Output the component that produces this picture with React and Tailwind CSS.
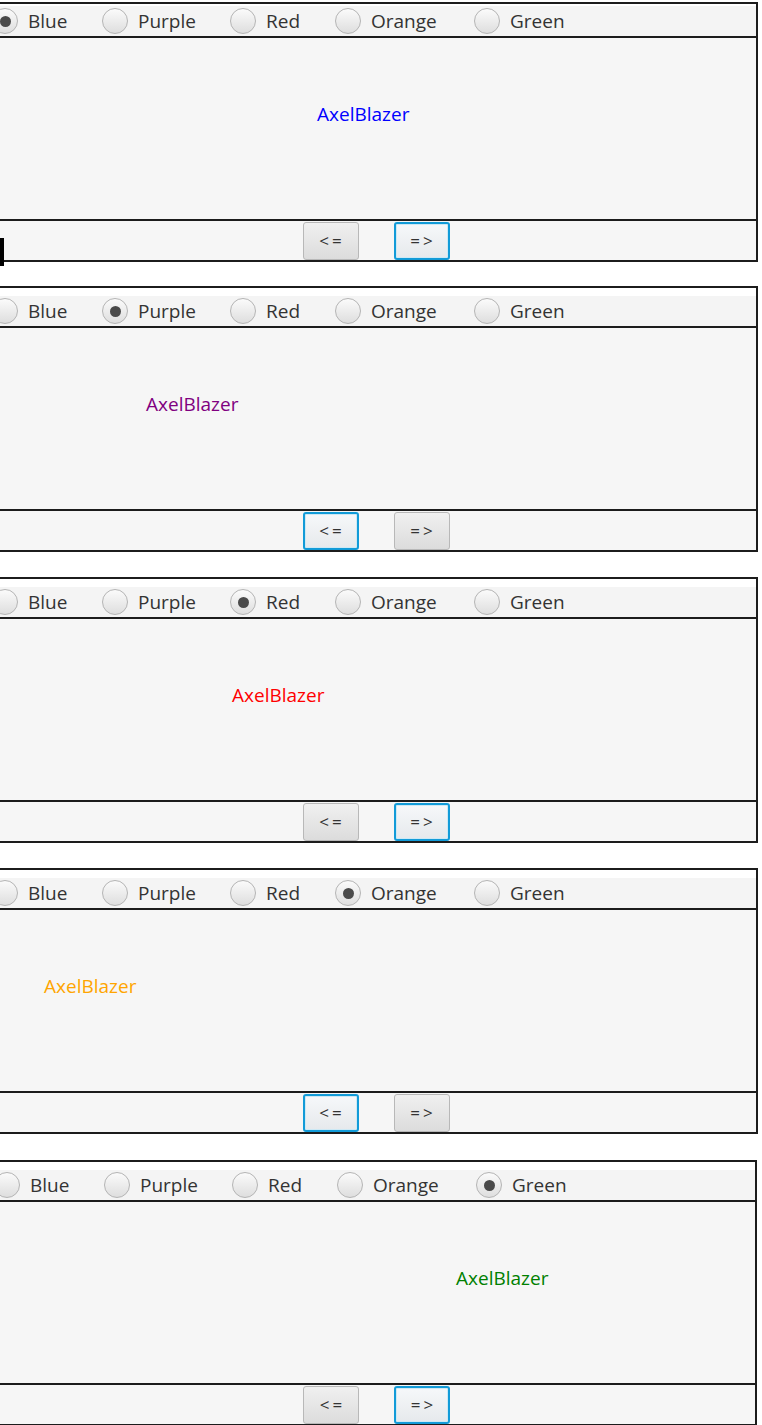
import React from "react";

const colors = ["Blue", "Purple", "Red", "Orange", "Green"];
const itemWidths = ["w-[110px]", "w-[128px]", "w-[105px]", "w-[139px]", "w-auto"];

const panels = [
  { selected: 0, text: "text-[#0000ff]", pos: "left-[321px]", focus: 1, strip: "h-[2px]", frame: "-ml-[6px] w-[764px]", gap: "mt-[2px]" },
  { selected: 1, text: "text-[#800080]", pos: "left-[150px]", focus: 0, strip: "h-[8px]", frame: "-ml-[6px] w-[764px]", gap: "mt-[24px]" },
  { selected: 2, text: "text-[#ff0000]", pos: "left-[236px]", focus: 1, strip: "h-[8px]", frame: "-ml-[6px] w-[764px]", gap: "mt-[25px]" },
  { selected: 3, text: "text-[#ffa500]", pos: "left-[48px]", focus: 0, strip: "h-[8px]", frame: "-ml-[6px] w-[764px]", gap: "mt-[25px]" },
  { selected: 4, text: "text-[#008000]", pos: "left-[458px]", focus: 1, strip: "h-[8px]", frame: "-ml-[4px] w-[761px]", gap: "mt-[26px]" },
];

const Radio = ({ label, checked, width }) => (
  <div className={`flex items-center shrink-0 ${width}`}>
    <span className="flex h-[26px] w-[26px] shrink-0 items-center justify-center rounded-full border border-[#b4b4b4] bg-gradient-to-b from-[#fbfbfb] to-[#dedede]">
      {checked && <span className="h-[11px] w-[11px] rounded-full bg-[#4a4a4a]" />}
    </span>
    <span className="ml-[10px] text-[19px] leading-none text-[#333]">{label}</span>
  </div>
);

const Button = ({ label, focused }) => (
  <button
    className={
      focused
        ? "flex h-[38px] w-[56px] items-center justify-center rounded-[3px] border-2 border-[#129bd8] bg-gradient-to-b from-[#f6f8fa] to-[#e6e9ec] text-[17px] tracking-[3px] pl-[3px] text-[#333] shadow-[inset_0_0_0_1px_#cde9f5]"
        : "flex h-[38px] w-[56px] items-center justify-center rounded-[3px] border border-[#b8b8b8] bg-gradient-to-b from-[#f0f0f0] to-[#dcdcdc] text-[17px] tracking-[3px] pl-[3px] text-[#333]"
    }
  >
    {label}
  </button>
);

const Panel = ({ p }) => (
  <div className={`${p.gap} ${p.frame} border-2 border-[#1c1c1c] bg-white`}>
    <div className={`${p.strip} bg-white`} />
    {/* colour radios */}
    <div className="flex h-[30px] items-center bg-[#f4f4f4] -ml-[4px]">
      {colors.map((c, i) => (
        <Radio key={c} label={c} checked={p.selected === i} width={itemWidths[i]} />
      ))}
    </div>
    <div className="h-[2px] bg-[#1c1c1c]" />
    {/* text area */}
    <div className="relative h-[181px] bg-[#f6f6f6]">
      <span className={`absolute top-[64px] ${p.pos} text-[19px] leading-[24px] ${p.text}`}>AxelBlazer</span>
    </div>
    <div className="h-[2px] bg-[#1c1c1c]" />
    {/* buttons */}
    <div className="flex h-[39px] items-start justify-center gap-[35px] bg-[#f6f6f6] pt-[1px]">
      <Button label="<=" focused={p.focus === 0} />
      <Button label="=>" focused={p.focus === 1} />
    </div>
  </div>
);

export default function App() {
  return (
    <div className="relative flex h-[1425px] w-[762px] flex-col overflow-hidden bg-white font-['Open_Sans',sans-serif]">
      {panels.map((p, i) => (
        <Panel key={i} p={p} />
      ))}
      <div className="absolute left-0 top-[238px] h-[28px] w-[4px] bg-black" />
    </div>
  );
}
